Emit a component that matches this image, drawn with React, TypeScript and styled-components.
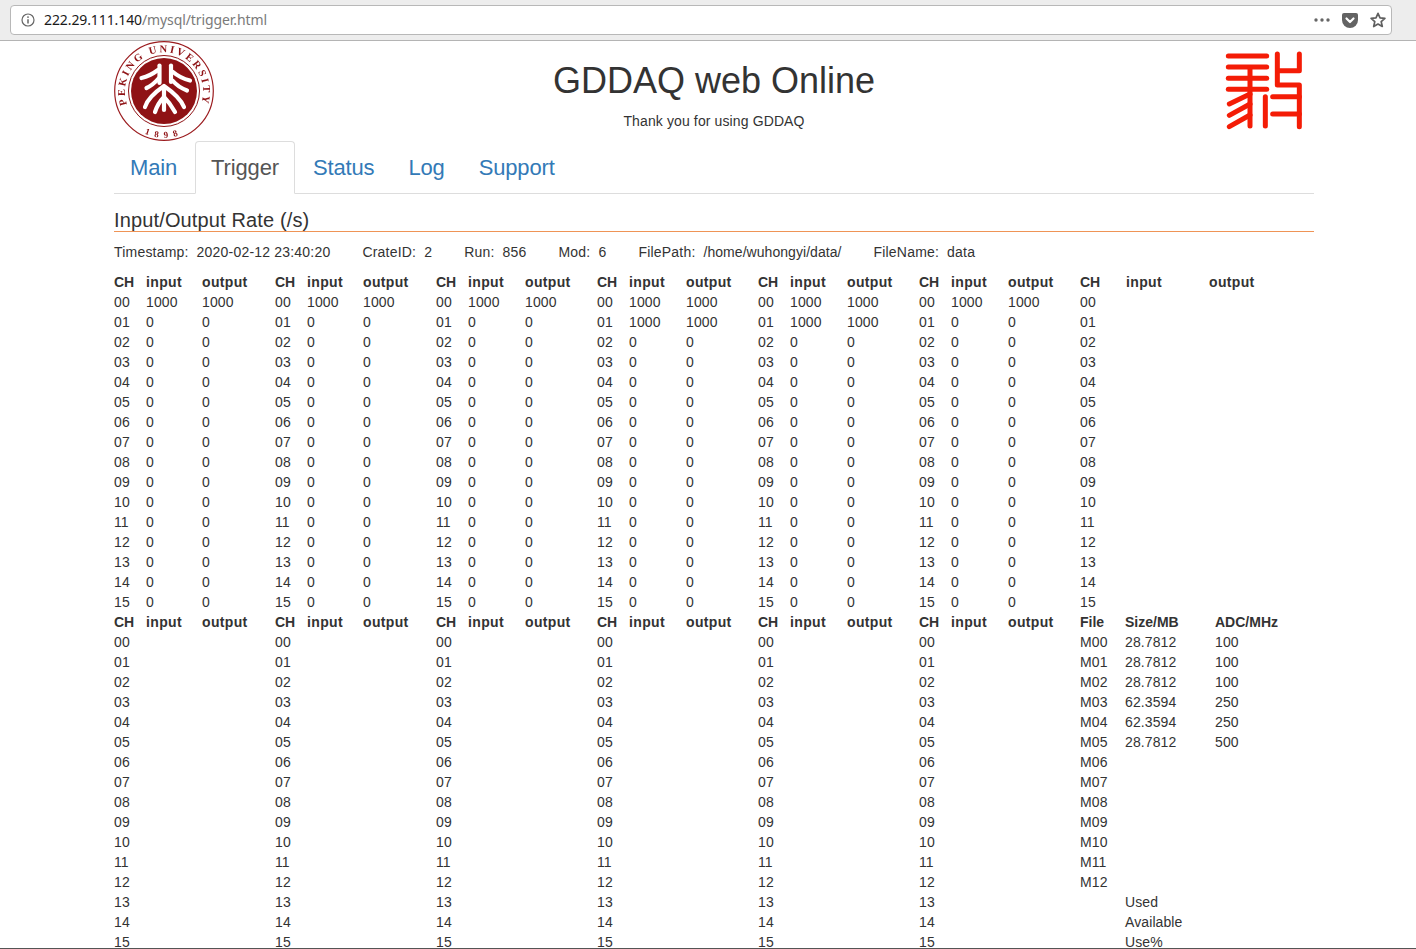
import styled, { createGlobalStyle } from "styled-components";

const GlobalStyle = createGlobalStyle`
  html, body {
    margin: 0;
    padding: 0;
    background: #fff;
  }
  body {
    font-family: "Liberation Sans", Arial, sans-serif;
    font-size: 14px;
    line-height: 20px;
    color: #333;
  }
  * {
    box-sizing: border-box;
  }
`;

const Window = styled.div`
  width: 1416px;
  height: 949px;
  display: flex;
  flex-direction: column;
  overflow: hidden;
  border-bottom: 1px solid #555;
`;

const Toolbar = styled.div`
  height: 41px;
  flex: none;
  padding: 5px 24px 0 10px;
  background: #ededed;
  border-bottom: 1px solid #b4b4b4;
`;

const UrlBox = styled.div`
  height: 30px;
  display: flex;
  align-items: center;
  padding: 0 5px 0 10px;
  background: #fff;
  border: 1px solid #b8b8b8;
  border-radius: 4px;
  font-family: "Noto Sans", sans-serif;
  font-size: 14px;
  letter-spacing: -0.1px;
  color: #7a7a7a;
`;

const UrlText = styled.div`
  flex: 1;
  margin-left: 9px;
  white-space: nowrap;
  b {
    font-weight: 400;
    color: #1a1a1a;
  }
`;

const ToolIcon = styled.svg<{ $gap?: number }>`
  flex: none;
  display: block;
  margin-left: ${(p) => p.$gap ?? 12}px;
`;

const Page = styled.div`
  width: 1200px;
  margin-left: 114px;
`;

const Header = styled.header`
  display: grid;
  grid-template-columns: 100px 1fr 100px;
  height: 100px;
`;

const Logo = styled.svg`
  display: block;
  filter: blur(0.3px);
`;

const Seal = styled.svg`
  display: block;
  justify-self: end;
  margin: 4px 4px 0 0;
  filter: blur(0.4px);
`;

const Masthead = styled.div`
  text-align: center;
  padding-top: 20px;
`;

const Title = styled.h1`
  margin: 0 0 10px;
  font-size: 36px;
  line-height: 40px;
  font-weight: 500;
`;

const Lead = styled.p`
  margin: 0;
  letter-spacing: 0.12px;
`;

const Tabs = styled.ul`
  display: flex;
  gap: 2px;
  margin: 0;
  padding: 0;
  list-style: none;
  height: 53px;
  border-bottom: 1px solid #ddd;
`;

const Tab = styled.li<{ $active?: boolean }>`
  height: 53px;
  padding: 0 15px;
  font-size: 22px;
  line-height: 51px;
  letter-spacing: -0.15px;
  border: 1px solid ${(p) => (p.$active ? "#ddd" : "transparent")};
  border-bottom-color: ${(p) => (p.$active ? "#fff" : "transparent")};
  border-radius: 4px 4px 0 0;
  background: ${(p) => (p.$active ? "#fff" : "transparent")};
  color: ${(p) => (p.$active ? "#555" : "#337ab7")};
`;

const SectionTitle = styled.h3`
  margin: 15px 0 0;
  height: 23px;
  font-size: 20px;
  line-height: 22px;
  font-weight: 500;
  letter-spacing: 0.14px;
  border-bottom: 1px solid #ef9456;
`;

const Meta = styled.div`
  display: flex;
  gap: 32px;
  margin: 10px 0;
  letter-spacing: 0.2px;
`;

const MetaValue = styled.span<{ $tight?: boolean }>`
  margin-left: 8px;
  letter-spacing: ${(p) => (p.$tight ? "0.05px" : "inherit")};
`;

const Table = styled.table`
  width: 1200px;
  table-layout: fixed;
  border-collapse: collapse;
  border-spacing: 0;
`;

const Col = styled.col<{ $w: number }>`
  width: ${(p) => p.$w}px;
`;

const Th = styled.th<{ $loose?: boolean }>`
  height: 20px;
  padding: 0;
  text-align: left;
  font-weight: 700;
  letter-spacing: ${(p) => (p.$loose ? "0.35px" : "0")};
`;

const Td = styled.td`
  height: 20px;
  padding: 0;
  letter-spacing: 0.1px;
`;

const GROUPS = [
  [32, 56, 73],
  [32, 56, 73],
  [32, 57, 72],
  [32, 57, 72],
  [32, 57, 72],
  [32, 57, 72],
];
const pad = (n: number) => String(n).padStart(2, "0");
const CHANNELS = Array.from({ length: 16 }, (_, i) => i);

// how many channels read 1000 in each module group
const ACTIVE = [1, 1, 1, 2, 2, 1];

const rateHead = ["CH", "input", "output"];

const rateTable = {
  cols: [...GROUPS.flat(), 46, 83, 105],
  head: [...GROUPS.flatMap(() => rateHead), ...rateHead],
  rows: CHANNELS.map((ch) => [
    ...ACTIVE.flatMap((n) => {
      const v = ch < n ? "1000" : "0";
      return [pad(ch), v, v];
    }),
    pad(ch),
    "",
    "",
  ]),
};

const FILES: Record<number, string[]> = {
  0: ["28.7812", "100"],
  1: ["28.7812", "100"],
  2: ["28.7812", "100"],
  3: ["62.3594", "250"],
  4: ["62.3594", "250"],
  5: ["28.7812", "500"],
};
const DISK = ["Used", "Available", "Use%"];

const fileTable = {
  cols: [...GROUPS.flat(), 45, 90, 99],
  head: [...GROUPS.flatMap(() => rateHead), "File", "Size/MB", "ADC/MHz"],
  rows: CHANNELS.map((ch) => [
    ...GROUPS.flatMap(() => [pad(ch), "", ""]),
    ch < 13 ? `M${pad(ch)}` : "",
    ch < 13 ? FILES[ch]?.[0] ?? "" : DISK[ch - 13],
    FILES[ch]?.[1] ?? "",
  ]),
};

function DataTable({ cols, head, rows }: { cols: number[]; head: string[]; rows: string[][] }) {
  return (
    <Table>
      <colgroup>
        {cols.map((w, i) => (
          <Col key={i} $w={w} />
        ))}
      </colgroup>
      <thead>
        <tr>
          {head.map((h, i) => (
            <Th key={i} $loose={h === "input" || h === "output"}>
              {h}
            </Th>
          ))}
        </tr>
      </thead>
      <tbody>
        {rows.map((row, r) => (
          <tr key={r}>
            {row.map((c, i) => (
              <Td key={i}>{c}</Td>
            ))}
          </tr>
        ))}
      </tbody>
    </Table>
  );
}

function PekingLogo() {
  return (
    <Logo width="100" height="100" viewBox="0 0 100 100">
      <defs>
        <path id="arcTop" d="M15 67.5 A39 39 0 1 1 85 67.5" />
        <path id="arcBottom" d="M18 84 A46.5 46.5 0 0 0 82 84" />
      </defs>
      <circle cx="50" cy="50" r="49.3" fill="#fff" stroke="#9b1c1f" strokeWidth="1.2" />
      <circle cx="50" cy="50" r="35.5" fill="#fff" stroke="#8f1215" strokeWidth="1" />
      <circle cx="50" cy="50" r="33" fill="#8f1215" />
      <g fill="none" stroke="#fff" strokeWidth="4.2" strokeLinecap="round" strokeLinejoin="round">
        <path d="M45.5 24.5 V42" />
        <path d="M57 24.5 V41" />
        <path d="M27.5 37 Q36 35 44 29" />
        <path d="M32.5 47 Q39 44 44.5 37.5" />
        <path d="M59 31 Q66 37 76 39.5" />
        <path d="M59 40 Q64 46 73 49.5" />
        <path d="M31 66 Q34 56 50 45 Q66 56 70 66" />
        <path d="M41 71 Q44 62 50 56 Q56 62 61 71" />
        <path d="M50 46 V69" />
      </g>
      <text fontFamily="'Liberation Serif', serif" fontSize="10.5" fontWeight="700" fill="#8f1215" letterSpacing="2.3" textAnchor="middle">
        <textPath href="#arcTop" startOffset="50%">PEKING UNIVERSITY</textPath>
      </text>
      <text fontFamily="'Liberation Serif', serif" fontSize="9" fontWeight="700" fill="#8f1215" letterSpacing="5.5" textAnchor="middle">
        <textPath href="#arcBottom" startOffset="50%">1898</textPath>
      </text>
    </Logo>
  );
}

function RedSeal() {
  return (
    <Seal width="90" height="90" viewBox="60 135 270 270">
      <g fill="none" stroke="#f41c06" strokeWidth="15" strokeLinecap="round" strokeLinejoin="round">
        <path d="M85 168 H200" />
        <path d="M85 201 H200" />
        <path d="M85 235 H200" />
        <path d="M85 268 H200" />
        <path d="M150 205 V378" />
        <path d="M196 290 V378" />
        <path d="M88 312 L150 282" />
        <path d="M88 346 L150 312" />
        <path d="M88 380 L150 345" />
        <path d="M232 162 V255 H298 V380" />
        <path d="M298 162 V212 H236" />
        <path d="M218 290 H298" />
        <path d="M218 342 H298" />
      </g>
    </Seal>
  );
}

export default function App() {
  return (
    <Window>
      <GlobalStyle />
      <Toolbar>
        <UrlBox>
          <ToolIcon width="14" height="14" viewBox="0 0 14 14" $gap={0}>
            <circle cx="7" cy="7" r="6" fill="none" stroke="#666" strokeWidth="1.2" />
            <path d="M7 6.2 V10.4" stroke="#666" strokeWidth="1.5" />
            <circle cx="7" cy="4.1" r="0.9" fill="#666" />
          </ToolIcon>
          <UrlText>
            <b>222.29.111.140</b>/mysql/trigger.html
          </UrlText>
          <ToolIcon width="16" height="4" viewBox="0 0 16 4" $gap={8}>
            <g fill="#666">
              <circle cx="2" cy="2" r="1.7" />
              <circle cx="8" cy="2" r="1.7" />
              <circle cx="14" cy="2" r="1.7" />
            </g>
          </ToolIcon>
          <ToolIcon width="16" height="15" viewBox="0 0 16 15">
            <path d="M2 0 H14 A2 2 0 0 1 16 2 V7 A8 8 0 0 1 0 7 V2 A2 2 0 0 1 2 0 Z" fill="#636363" />
            <path d="M4.5 5.5 L8 9 L11.5 5.5" fill="none" stroke="#fff" strokeWidth="2.2" strokeLinecap="round" strokeLinejoin="round" />
          </ToolIcon>
          <ToolIcon width="16" height="16" viewBox="0 0 16 16">
            <path d="M8 1.3 L10 5.8 L14.9 6.3 L11.2 9.6 L12.3 14.5 L8 12 L3.7 14.5 L4.8 9.6 L1.1 6.3 L6 5.8 Z" fill="none" stroke="#5f5f5f" strokeWidth="1.7" strokeLinejoin="round" />
          </ToolIcon>
        </UrlBox>
      </Toolbar>
      <Page>
        <Header>
          <PekingLogo />
          <Masthead>
            <Title>GDDAQ web Online</Title>
            <Lead>Thank you for using GDDAQ</Lead>
          </Masthead>
          <RedSeal />
        </Header>
        <Tabs>
          <Tab>Main</Tab>
          <Tab $active>Trigger</Tab>
          <Tab>Status</Tab>
          <Tab>Log</Tab>
          <Tab>Support</Tab>
        </Tabs>
        <SectionTitle>Input/Output Rate (/s)</SectionTitle>
        <Meta>
          <span>
            Timestamp:<MetaValue>2020-02-12 23:40:20</MetaValue>
          </span>
          <span>
            CrateID:<MetaValue>2</MetaValue>
          </span>
          <span>
            Run:<MetaValue>856</MetaValue>
          </span>
          <span>
            Mod:<MetaValue>6</MetaValue>
          </span>
          <span>
            FilePath:<MetaValue $tight>/home/wuhongyi/data/</MetaValue>
          </span>
          <span>
            FileName:<MetaValue>data</MetaValue>
          </span>
        </Meta>
        <DataTable {...rateTable} />
        <DataTable {...fileTable} />
      </Page>
    </Window>
  );
}
